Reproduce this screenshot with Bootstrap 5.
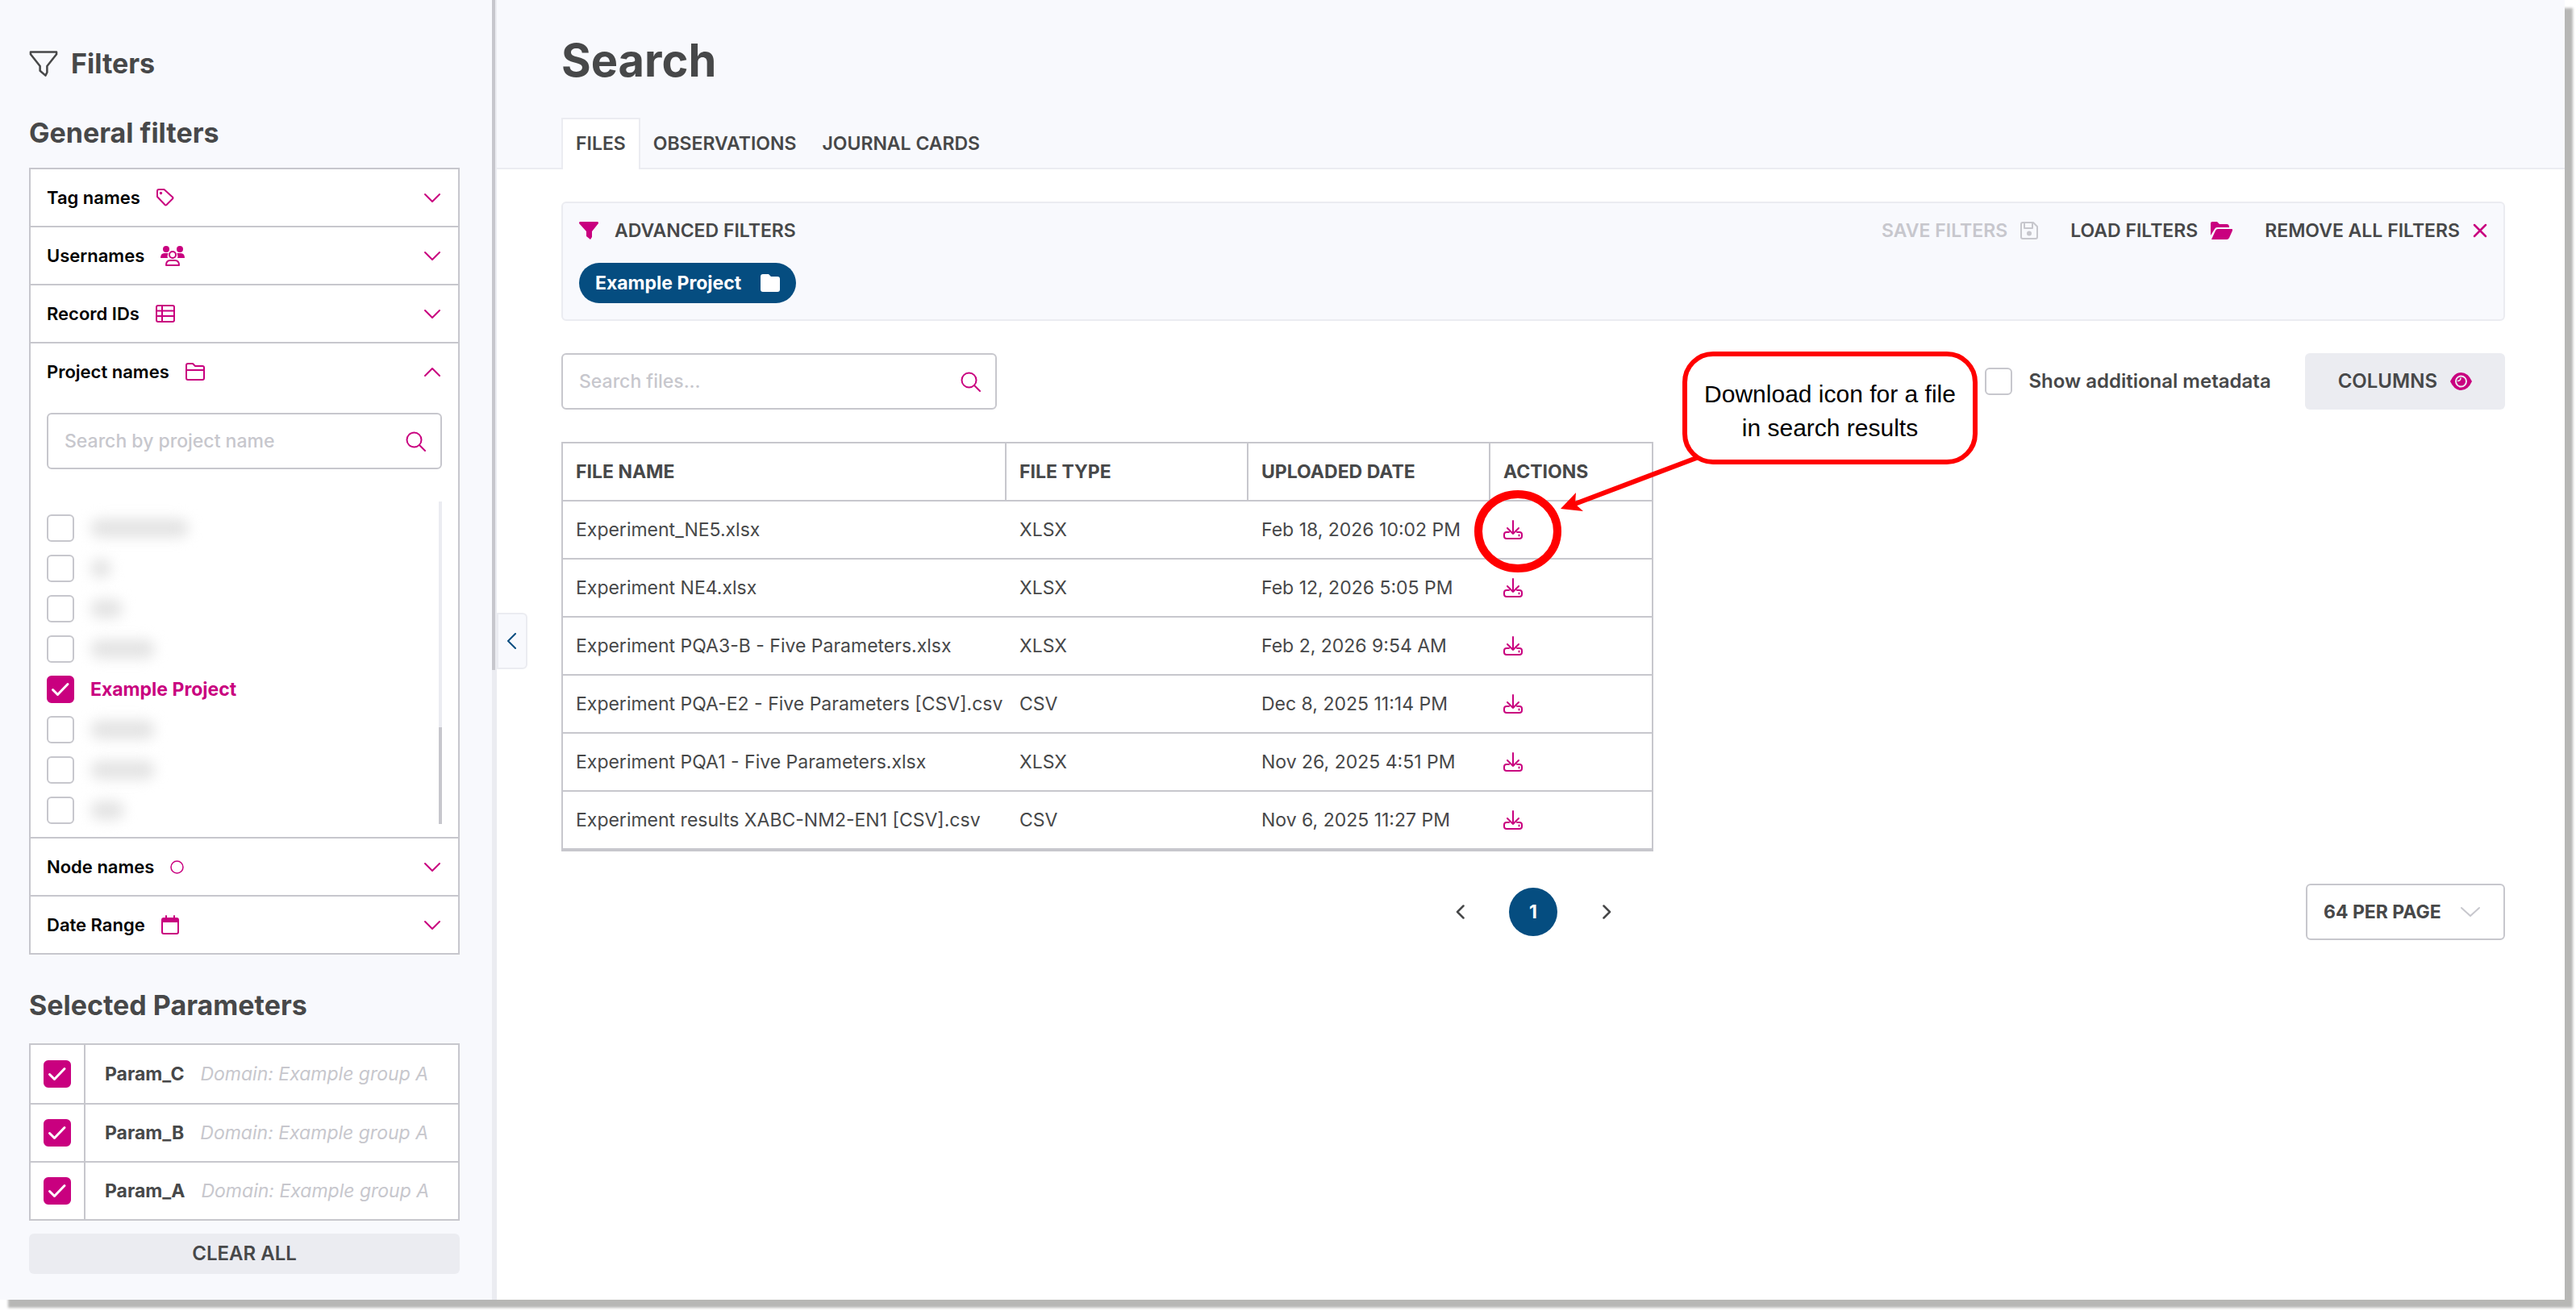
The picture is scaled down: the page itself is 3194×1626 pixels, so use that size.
<!DOCTYPE html>
<html lang="en">
<head>
<meta charset="utf-8">
<meta name="viewport" content="width=device-width, initial-scale=1">
<title>Search</title>
<link href="https://cdn.jsdelivr.net/npm/bootstrap@5.3.0/dist/css/bootstrap.min.css" rel="stylesheet">
<style>
:root{--ink:#474849;--pink:#c9007f;--navy:#054d80;--line:#c7c7cd;--soft:#ebecf1;--pale:#f8f9fd}
body{min-height:100vh;padding:0 14px 14px 0;font-family:Inter,"Liberation Sans",sans-serif;font-size:23px;line-height:40px;color:var(--ink);background:#fff}
svg{display:block;flex:none;fill:none;stroke:currentColor;stroke-width:2;stroke-linecap:round;stroke-linejoin:round}
.solid{fill:currentColor;stroke:none}
.pink{color:var(--pink)}
.app-frame{min-height:calc(100vh - 14px);box-shadow:10px 10px 3px #b7b7b5;background:#fff}
.filter-side{width:610px;flex:none;background:var(--pale);padding:59px 40px 32px 36px}
.side-title{font-size:34px;line-height:40px;font-weight:700;margin:0}
.side-title.general{margin-top:46px}
.side-scroll{width:6px;flex:none;background:var(--soft)}
.side-thumb{width:4px;height:831px;background:var(--line)}
.filter-list{border:2px solid var(--line);background:#fff;margin:23px 0 43px;color:#000}
.filter-list section+section{border-top:2px solid var(--line)}
.filter-head{width:100%;height:70px;border:0;background:none;gap:20px;padding:0 21px 0 20px;font-size:22px;font-weight:600;color:#000}
.filter-body{padding:16px 20px}
.search-box{height:70px;border:2px solid var(--line);border-radius:6px;background:#fff;padding:0 18px 0 20px}
.search-box input{border:0;outline:0;background:none;min-width:0;color:var(--ink);font-weight:500;padding:0}
.search-box input::placeholder{color:var(--line);opacity:1}
.project-list{margin-top:40px;padding-top:16px;gap:16px}
.list-thumb-track{width:4px;margin-top:40px;background:var(--soft)}
.list-thumb{height:120px;background:var(--line)}
.tick{width:34px;height:34px;margin:0;border:2px solid var(--line);border-radius:6px;flex:none;float:none}
.tick:checked{background-color:var(--pink);border-color:var(--pink);background-size:30px 30px;background-image:url("data:image/svg+xml,%3Csvg xmlns='http://www.w3.org/2000/svg' viewBox='0 0 30 30' fill='none' stroke='white' stroke-width='3' stroke-linecap='round' stroke-linejoin='round'%3E%3Cpath d='M5.500 15.500l6 6L24 8.500'/%3E%3C/svg%3E")}
.project-row{height:34px;gap:20px}
.redacted{height:24px;background:#e4e4e4;filter:blur(8px);border-radius:12px}
.param-list{border:2px solid var(--line);background:#fff;margin:27px 0 16px}
.param-row{height:72px}
.param-row+.param-row{border-top:2px solid var(--line)}
.param-tick{width:68px;border-right:2px solid var(--line)}
.param-label{gap:20px;padding-left:24px}
.param-domain{color:var(--line);font-style:italic}
.soft-btn{background:var(--soft);border:0;border-radius:6px;color:var(--ink);font-size:24px;font-weight:600}
.clear-btn{height:50px}
.page-main{min-width:0}
.page-head{background:var(--pale);padding-top:42px}
.page-head h1{font-size:56px;line-height:66px;font-weight:700;margin:0 0 38px 80px}
.file-tabs{border-bottom:2px solid var(--soft);padding-left:80px}
.file-tabs .nav-link{height:64px;line-height:64px;padding:0 16px;margin-bottom:-2px;border:0;border-radius:0;color:var(--ink);font-weight:600}
.file-tabs .nav-link.active{border:2px solid var(--soft);border-bottom:0;background:#fff;color:var(--ink);line-height:60px}
.page-body{padding:40px 74px 40px 80px}
.adv-panel{background:var(--pale);border:2px solid var(--soft);border-radius:6px;padding:14px 20px 20px;margin-bottom:40px;font-weight:600}
.adv-panel button{border:0;background:none;padding:0;color:var(--ink);font-weight:600}
.adv-panel button:disabled{color:var(--line)}
.adv-title{margin-left:20px}
.adv-actions{gap:40px}
.adv-panel .project-pill{background:var(--navy);color:#fff;height:50px;border-radius:25px;padding:0 20px;margin-top:20px;gap:24px;font-weight:700}
.files-search{width:540px}
.meta-toggle{gap:20px}
.meta-label{font-size:24px;font-weight:600}
.columns-btn{height:70px;padding:0 41px;margin-left:42px}
.file-table{width:1354px;margin:40px 0;border:2px solid var(--line);border-bottom-width:4px;border-collapse:separate;border-spacing:0;table-layout:fixed;color:var(--ink);background:#fff}
.file-table th,.file-table td{padding:0 0 0 18px;vertical-align:middle;white-space:nowrap}
.file-table th{height:70px;font-weight:700;padding-left:16px}
.file-table td{height:72px;border-top:2px solid var(--line)}
.file-table td:first-child{padding-left:16px}
.file-table th+th{border-left:2px solid var(--line)}
.col-name{width:548px}
.col-mid{width:300px}
.icon-btn{border:0;background:none;padding:0}
.pager-row{display:grid;grid-template-columns:1fr auto 1fr;align-items:center}
.pager{gap:31px;grid-column:2}
.pager button{width:60px;height:60px;border:0;border-radius:50%;background:none;color:var(--ink);padding:0}
.pager .on{background:var(--navy);color:#fff;font-weight:700}
.per-page{width:247px;height:70px;padding:0 20px;border:2px solid var(--line);border-radius:6px;color:var(--ink);font-size:23px;font-weight:700;background-size:26px 14px;background-position:right 28px center;background-image:url("data:image/svg+xml,%3Csvg xmlns='http://www.w3.org/2000/svg' viewBox='0 0 26 14' fill='none' stroke='%23c7c7cd' stroke-width='2' stroke-linecap='round' stroke-linejoin='round'%3E%3Cpath d='M2 2l11 10L24 2'/%3E%3C/svg%3E")}
.fold-btn{left:0;top:760px;width:38px;height:70px;border:2px solid var(--soft);border-radius:0 6px 6px 0;background:var(--pale);color:var(--navy);padding:0 0 0 10px}
.note-box{left:1390px;top:-2px;width:366px;height:140px;padding-top:7px;border:6px solid #f00;border-radius:38px;background:#fff;color:#000;font:30px/42px "Liberation Sans",Arial,sans-serif}
.note-lines{left:0;top:0;pointer-events:none;color:#f00}
</style>
<script src="https://cdn.jsdelivr.net/npm/bootstrap@5.3.0/dist/js/bootstrap.bundle.min.js"></script>
</head>
<body>
<svg width="0" height="0" class="position-absolute" aria-hidden="true">
  <symbol id="down" viewBox="0 0 22 13"><path d="M2 2l9 9 9-9"/></symbol>
  <symbol id="up" viewBox="0 0 22 13"><path d="M2 11l9-9 9 9"/></symbol>
  <symbol id="glass" viewBox="0 0 25 25"><circle cx="10.500" cy="10.500" r="9"/><path d="M17 17l7 7"/></symbol>
  <symbol id="get" viewBox="0 0 24 24"><path d="M12 1v16M5 10l7 7 7-7M7 15H4q-3 0-3 3v2q0 3 3 3h16q3 0 3-3v-2q0-3-3-3h-3M19.500 18.500v1"/></symbol>
</svg>
<div class="app-frame d-flex">
  <aside class="filter-side">
    <div class="d-flex align-items-center gap-3">
      <svg width="36" height="34" viewBox="0 0 37 34"><path stroke-width="2.600" d="M2 2h33v3L23 20v8l-2 4-7-6v-6L2 5z"/></svg>
      <h2 class="side-title">Filters</h2>
    </div>
    <h2 class="side-title general">General filters</h2>
    <div class="filter-list">
      <section><button class="filter-head d-flex align-items-center" type="button">Tag names
        <svg class="pink" width="22" height="22" viewBox="0 0 22 22"><path d="M1 3q0-2 2-2h6.500L20 10.500q1 1 0 2L12.500 20q-1 1-2 0L1 10z"/><circle cx="5.500" cy="5.500" r=".7"/></svg>
        <svg class="pink ms-auto" width="22" height="13"><use href="#down"/></svg></button></section>
      <section><button class="filter-head d-flex align-items-center" type="button">Usernames
        <svg class="pink" width="30" height="25" viewBox="0 0 30 25"><g class="solid"><circle cx="7" cy="4" r="4"/><circle cx="24" cy="4" r="4"/><path d="M0 15q0-6 5-6h4q1 0 0 2-1 2 0 4zM30 15q0-6-5-6h-4q-1 0 0 2 1 2 0 4z"/></g><circle cx="15" cy="11" r="4"/><path d="M7 24q0-6 5-6h6q5 0 5 6z"/></svg>
        <svg class="pink ms-auto" width="22" height="13"><use href="#down"/></svg></button></section>
      <section><button class="filter-head d-flex align-items-center" type="button">Record IDs
        <svg class="pink" width="24" height="22" viewBox="0 0 24 22"><rect x="1" y="1" width="22" height="20" rx="2"/><path d="M1 7.500h22M1 14h22M8 1v20"/></svg>
        <svg class="pink ms-auto" width="22" height="13"><use href="#down"/></svg></button></section>
      <section><button class="filter-head d-flex align-items-center" type="button" aria-expanded="true">Project names
        <svg class="pink" width="24" height="22" viewBox="0 0 24 22"><path d="M1 3q0-2 2-2h6l3 3h9q2 0 2 2v13q0 2-2 2H3q-2 0-2-2zM1 9h22"/></svg>
        <svg class="pink ms-auto" width="22" height="13"><use href="#up"/></svg></button>
        <div class="filter-body">
          <div class="search-box d-flex align-items-center"><input class="flex-grow-1" type="search" placeholder="Search by project name" aria-label="Search by project name"><svg class="pink" width="25" height="25"><use href="#glass"/></svg></div>
          <div class="d-flex"><div class="project-list d-flex flex-column flex-grow-1">
            <div class="project-row d-flex align-items-center"><input class="form-check-input tick" type="checkbox" aria-label="Project 1"><span class="redacted" style="width:122px"></span></div>
            <div class="project-row d-flex align-items-center"><input class="form-check-input tick" type="checkbox" aria-label="Project 2"><span class="redacted" style="width:26px"></span></div>
            <div class="project-row d-flex align-items-center"><input class="form-check-input tick" type="checkbox" aria-label="Project 3"><span class="redacted" style="width:40px"></span></div>
            <div class="project-row d-flex align-items-center"><input class="form-check-input tick" type="checkbox" aria-label="Project 4"><span class="redacted" style="width:80px"></span></div>
            <div class="project-row d-flex align-items-center"><input class="form-check-input tick" type="checkbox" id="pj" checked><label for="pj" class="pink fw-bold">Example Project</label></div>
            <div class="project-row d-flex align-items-center"><input class="form-check-input tick" type="checkbox" aria-label="Project 6"><span class="redacted" style="width:80px"></span></div>
            <div class="project-row d-flex align-items-center"><input class="form-check-input tick" type="checkbox" aria-label="Project 7"><span class="redacted" style="width:80px"></span></div>
            <div class="project-row d-flex align-items-center"><input class="form-check-input tick" type="checkbox" aria-label="Project 8"><span class="redacted" style="width:42px"></span></div>
          </div><div class="list-thumb-track d-flex flex-column justify-content-end"><div class="list-thumb"></div></div></div>
        </div></section>
      <section><button class="filter-head d-flex align-items-center" type="button">Node names
        <svg class="pink" width="17" height="17" viewBox="0 0 17 17"><circle cx="8.500" cy="8.500" r="7.500" stroke-width="1.500"/></svg>
        <svg class="pink ms-auto" width="22" height="13"><use href="#down"/></svg></button></section>
      <section><button class="filter-head d-flex align-items-center" type="button">Date Range
        <svg class="pink" width="22" height="24" viewBox="0 0 22 24"><rect x="1" y="4" width="20" height="19" rx="2"/><path class="solid" d="M1 4h20v5H1z"/><path d="M6 1v3M16 1v3"/></svg>
        <svg class="pink ms-auto" width="22" height="13"><use href="#down"/></svg></button></section>
    </div>
    <h2 class="side-title">Selected Parameters</h2>
    <div class="param-list">
      <div class="param-row d-flex"><div class="param-tick d-flex align-items-center justify-content-center"><input class="form-check-input tick" type="checkbox" id="pc" checked></div><label for="pc" class="param-label d-flex align-items-center"><b>Param_C</b><span class="param-domain">Domain: Example group A</span></label></div>
      <div class="param-row d-flex"><div class="param-tick d-flex align-items-center justify-content-center"><input class="form-check-input tick" type="checkbox" id="pb" checked></div><label for="pb" class="param-label d-flex align-items-center"><b>Param_B</b><span class="param-domain">Domain: Example group A</span></label></div>
      <div class="param-row d-flex"><div class="param-tick d-flex align-items-center justify-content-center"><input class="form-check-input tick" type="checkbox" id="pa" checked></div><label for="pa" class="param-label d-flex align-items-center"><b>Param_A</b><span class="param-domain">Domain: Example group A</span></label></div>
    </div>
    <button class="soft-btn clear-btn d-block w-100" type="button">CLEAR ALL</button>
  </aside>
  <div class="side-scroll"><div class="side-thumb"></div></div>
  <main class="page-main flex-grow-1 position-relative">
    <button class="fold-btn position-absolute" type="button" aria-label="Hide filters"><svg width="12" height="20" viewBox="0 0 12 20"><path d="M11 1l-9 9 9 9"/></svg></button>
    <header class="page-head">
      <h1>Search</h1>
      <nav class="nav nav-tabs file-tabs">
        <a class="nav-link active" href="#" aria-current="page">FILES</a>
        <a class="nav-link" href="#">OBSERVATIONS</a>
        <a class="nav-link" href="#">JOURNAL CARDS</a>
      </nav>
    </header>
    <div class="page-body">
      <div class="adv-panel">
        <div class="d-flex align-items-center">
          <svg class="pink solid" width="24" height="22" viewBox="0 0 24 22"><path d="M1 0h22q1 0 1 2l-8 10v7l-2 3-5-4v-6L0 2q0-2 1-2z"/></svg>
          <span class="adv-title">ADVANCED FILTERS</span>
          <div class="adv-actions d-flex ms-auto">
            <button class="d-flex align-items-center gap-3" type="button" disabled>SAVE FILTERS <svg width="22" height="22" viewBox="0 0 22 22"><path d="M3 1h13l5 5v13q0 2-2 2H3q-2 0-2-2V3q0-2 2-2zM5 1v7h10V1"/><circle class="solid" cx="11" cy="14.500" r="3"/></svg></button>
            <button class="d-flex align-items-center gap-3" type="button">LOAD FILTERS <svg class="pink solid" width="27" height="22" viewBox="0 0 27 22"><path d="M0 17V2q0-2 2-2h6l3 3h9q3 0 3 4H8q-2 0-3 2zM1 22L6 11q1-2 3-2h17q2 0 1 2l-4 9q-1 2-3 2z"/></svg></button>
            <button class="d-flex align-items-center gap-3" type="button">REMOVE ALL FILTERS <svg class="pink" width="18" height="18" viewBox="0 0 18 18"><path stroke-width="2.500" d="M2 2l14 14M16 2L2 16"/></svg></button>
          </div>
        </div>
        <button class="project-pill d-flex align-items-center" type="button">Example Project <svg class="solid" width="24" height="22" viewBox="0 0 24 22"><path d="M0 3q0-3 3-3h7l3 3h8q3 0 3 3v13q0 3-3 3H3q-3 0-3-3z"/></svg></button>
      </div>
      <div class="position-relative">
        <div class="d-flex align-items-center">
          <div class="search-box files-search d-flex align-items-center"><input class="flex-grow-1" type="search" placeholder="Search files..." aria-label="Search files"><svg class="pink" width="25" height="25"><use href="#glass"/></svg></div>
          <div class="meta-toggle d-flex align-items-center ms-auto"><input class="form-check-input tick" type="checkbox" id="meta"><label class="meta-label" for="meta">Show additional metadata</label></div>
          <button class="soft-btn columns-btn d-flex align-items-center gap-3" type="button">COLUMNS
            <svg class="pink" width="27" height="22" viewBox="0 0 27 22"><path class="solid" d="M0 11Q5 0 13.500 0T27 11Q22 22 13.500 22T0 11z"/><circle cx="13.500" cy="11" r="6.500" stroke="#ebecf1"/><path d="M13.500 7q0 3-4 4 0 4 4 4t4-4-4-4z" fill="currentColor" stroke="none"/><path d="M13 7q0 3-3.500 3.500" stroke="#ebecf1" stroke-width="1.500"/></svg></button>
        </div>
        <table class="file-table">
          <colgroup><col class="col-name"><col class="col-mid"><col class="col-mid"><col></colgroup>
          <thead><tr><th>FILE NAME</th><th>FILE TYPE</th><th>UPLOADED DATE</th><th>ACTIONS</th></tr></thead>
          <tbody>
            <tr><td>Experiment_NE5.xlsx</td><td>XLSX</td><td>Feb 18, 2026 10:02 PM</td><td><button class="icon-btn pink d-block" type="button" aria-label="Download"><svg width="24" height="24"><use href="#get"/></svg></button></td></tr>
            <tr><td>Experiment NE4.xlsx</td><td>XLSX</td><td>Feb 12, 2026 5:05 PM</td><td><button class="icon-btn pink d-block" type="button" aria-label="Download"><svg width="24" height="24"><use href="#get"/></svg></button></td></tr>
            <tr><td>Experiment PQA3-B - Five Parameters.xlsx</td><td>XLSX</td><td>Feb 2, 2026 9:54 AM</td><td><button class="icon-btn pink d-block" type="button" aria-label="Download"><svg width="24" height="24"><use href="#get"/></svg></button></td></tr>
            <tr><td>Experiment PQA-E2 - Five Parameters [CSV].csv</td><td>CSV</td><td>Dec 8, 2025 11:14 PM</td><td><button class="icon-btn pink d-block" type="button" aria-label="Download"><svg width="24" height="24"><use href="#get"/></svg></button></td></tr>
            <tr><td>Experiment PQA1 - Five Parameters.xlsx</td><td>XLSX</td><td>Nov 26, 2025 4:51 PM</td><td><button class="icon-btn pink d-block" type="button" aria-label="Download"><svg width="24" height="24"><use href="#get"/></svg></button></td></tr>
            <tr><td>Experiment results XABC-NM2-EN1 [CSV].csv</td><td>CSV</td><td>Nov 6, 2025 11:27 PM</td><td><button class="icon-btn pink d-block" type="button" aria-label="Download"><svg width="24" height="24"><use href="#get"/></svg></button></td></tr>
          </tbody>
        </table>
        <svg class="note-lines position-absolute" width="1500" height="300" viewBox="0 0 1500 300"><ellipse cx="1186" cy="221" rx="49" ry="46" stroke-width="10"/><path stroke-width="6" d="M1410 129L1254 188"/><path class="solid" d="M1239 193l19-20-1 14 10 9z"/></svg>
        <div class="note-box position-absolute d-flex align-items-center justify-content-center text-center">Download icon for a file<br>in search results</div>
      </div>
      <div class="pager-row">
        <nav class="pager d-flex" aria-label="Pages">
          <button class="d-flex align-items-center justify-content-center" type="button" aria-label="Previous"><svg width="11" height="18" viewBox="0 0 11 18"><path stroke-width="2.500" d="M9.500 1.500L2 9l7.500 7.500"/></svg></button>
          <button class="on" type="button" aria-current="page">1</button>
          <button class="d-flex align-items-center justify-content-center" type="button" aria-label="Next"><svg width="11" height="18" viewBox="0 0 11 18"><path stroke-width="2.500" d="M1.500 1.500L9 9l-7.500 7.500"/></svg></button>
        </nav>
        <select class="form-select per-page ms-auto" aria-label="Results per page"><option>64 PER PAGE</option></select>
      </div>
    </div>
  </main>
</div>
</body>
</html>
